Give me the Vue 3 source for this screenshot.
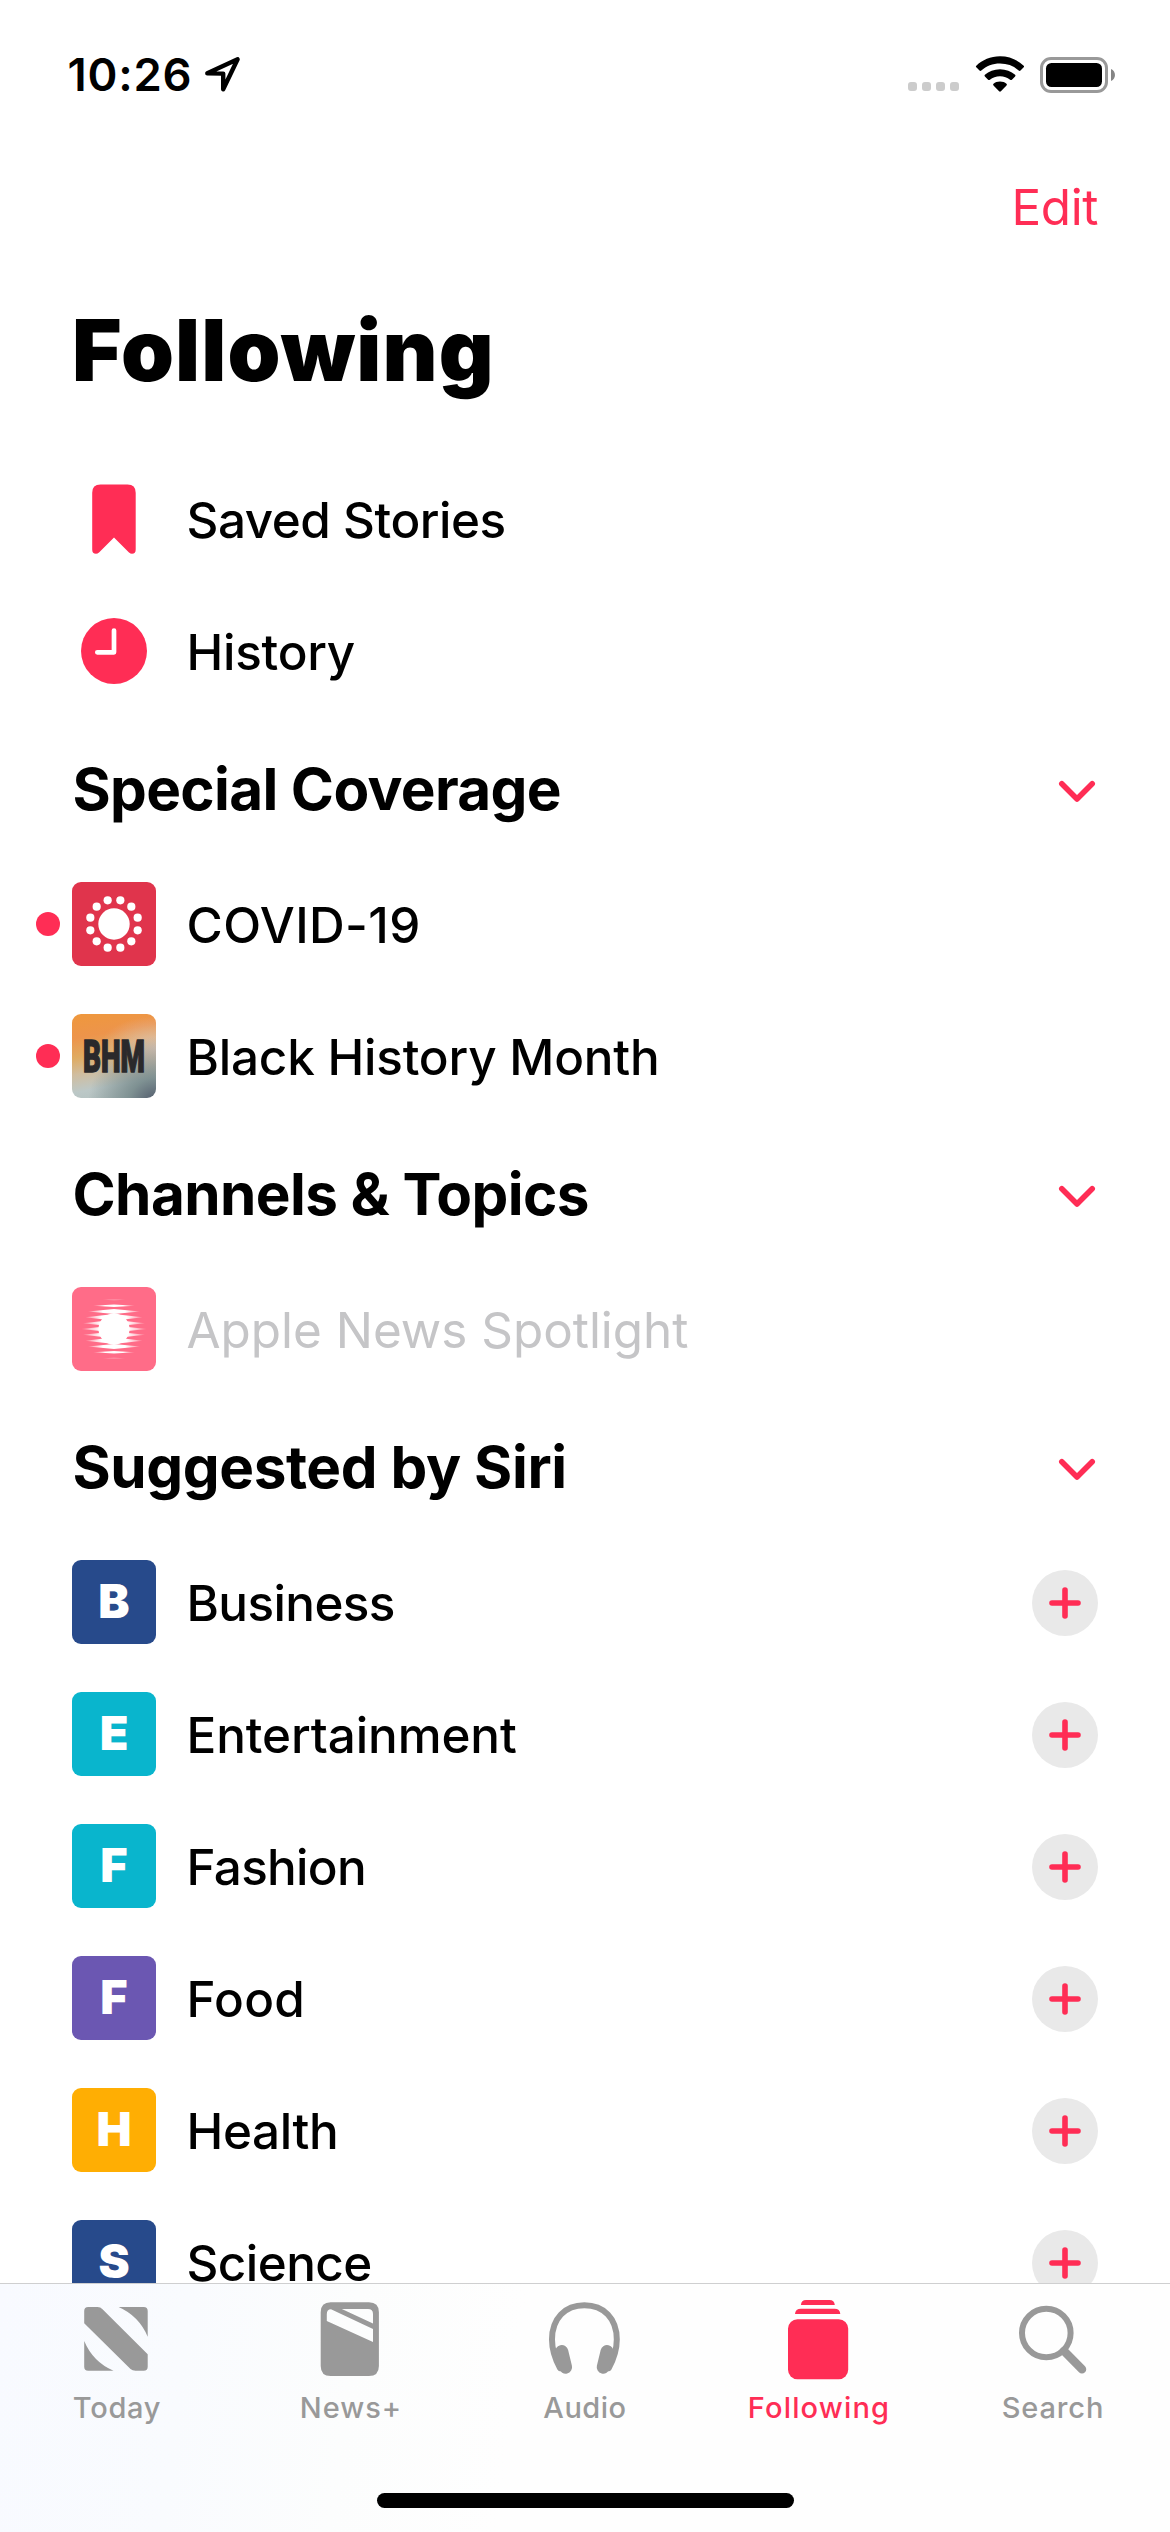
<script setup>
const shortcuts = [
  { name: 'Saved Stories', icon: 'bookmark', tracking: -0.46 },
  { name: 'History', icon: 'clock', tracking: -0.25 },
]

const sections = [
  {
    title: 'Special Coverage',
    tracking: -0.65,
    rows: [
      { name: 'COVID-19', art: 'covid', unread: true, color: '#e0344c', tracking: 0.43 },
      { name: 'Black History Month', art: 'bhm', unread: true, color: '#e5a566', tracking: -0.2 },
    ],
  },
  {
    title: 'Channels & Topics',
    tracking: -0.58,
    rows: [
      { name: 'Apple News Spotlight', art: 'spotlight', muted: true, color: '#ff6c88', tracking: 0 },
    ],
  },
  {
    title: 'Suggested by Siri',
    tracking: -0.4,
    rows: [
      { name: 'Business', letter: 'B', color: '#274a8b', add: true, tracking: -0.6 },
      { name: 'Entertainment', letter: 'E', color: '#09b5cd', add: true, tracking: -0.1 },
      { name: 'Fashion', letter: 'F', color: '#09b5cd', add: true, tracking: -0.7 },
      { name: 'Food', letter: 'F', color: '#6b57b2', add: true, tracking: 0.24 },
      { name: 'Health', letter: 'H', color: '#ffae03', add: true, tracking: -0.35 },
      { name: 'Science', letter: 'S', color: '#274a8b', add: true, tracking: -0.56 },
    ],
  },
]

const tabs = [
  { name: 'Today', tracking: 0.7 },
  { name: 'News+', tracking: 0.96 },
  { name: 'Audio', tracking: 0.5 },
  { name: 'Following', active: true, tracking: 1.16 },
  { name: 'Search', tracking: 0.86 },
]

const ring = Array.from({ length: 12 }, (_, i) => {
  const a = ((15 + i * 30) * Math.PI) / 180
  return { x: 42 + 24.5 * Math.cos(a), y: 42 + 24.5 * Math.sin(a) }
})

// Horizontal rays crossing the disc, widest at the centre
const rays = [12, 21, 26, 28.5, 31, 32.5, 31, 28.5, 26, 21, 12].map((half, i) => {
  const y = 42 + (i - 5) * 5.83
  const edge = Math.min(i, 10 - i)
  const t = [0.4, 1.2, 2.6, 3.4, 3.4, 3.4][edge]
  return { d: `M${42 - half} ${y}L42 ${y - t}L${42 + half} ${y}L42 ${y + t}Z`, opacity: edge === 0 ? 0.4 : 1 }
})

const track = (v) => ({ letterSpacing: v + 'px' })
</script>

<template>
  <div class="screen">
    <header class="status">
      <div class="clock">
        <span class="time">10:26</span>
        <svg class="arrow" width="38" height="38" viewBox="0 0 38 38">
          <path d="M3.300 17.200 33.600 3.300 19.200 33.200V17.600Z" fill="none" stroke="#000" stroke-width="4.400" stroke-linejoin="round" />
        </svg>
      </div>
      <div class="indicators">
        <div class="cell"><i v-for="n in 4" :key="n"></i></div>
        <svg class="wifi" width="50" height="37" viewBox="0 0 50 37">
          <path d="M25 .3C34.600 .3 42.500 3.900 48.700 9.700Q49.500 10.500 48.700 11.300L45.500 14.600Q44.600 15.400 43.700 14.600C38.600 10 32.300 7.600 25 7.600S11.400 10 6.300 14.600Q5.400 15.400 4.500 14.600L1.300 11.300Q.5 10.500 1.300 9.700C7.500 3.900 15.400 .3 25 .3Z" />
          <path d="M25 13.200C31 13.200 36.100 15.300 40.100 18.800Q41 19.600 40.100 20.500L36.900 23.700Q36 24.500 35.100 23.700C32.300 21.500 29 20.200 25 20.200S17.700 21.500 14.900 23.700Q14 24.500 13.100 23.700L9.900 20.500Q9 19.600 9.900 18.800C13.900 15.300 19 13.200 25 13.200Z" />
          <path d="M25 25.600C27.700 25.600 29.800 26.400 31.500 27.700Q32.400 28.500 31.500 29.400L25.900 35.300Q25 36.200 24.100 35.300L18.500 29.400Q17.600 28.500 18.500 27.700C20.200 26.400 22.300 25.600 25 25.600Z" />
        </svg>
        <svg class="battery" width="76" height="36" viewBox="0 0 76 36">
          <rect x="1.500" y="1.500" width="65" height="33" rx="9.500" fill="none" stroke="#999" stroke-width="3" />
          <rect x="6" y="6" width="56" height="24" rx="5.500" />
          <path d="M71 12C76.300 14 76.300 22 71 24Z" fill="#858585" />
        </svg>
      </div>
    </header>

    <nav class="navbar"><span class="edit">Edit</span></nav>
    <h1 class="title">Following</h1>

    <main class="list">
      <div v-for="s in shortcuts" :key="s.name" class="row">
        <div class="gutter"></div>
        <svg v-if="s.icon === 'bookmark'" class="glyph" viewBox="0 0 84 84">
          <path d="M28.500 7.500H55.500Q63.700 7.500 63.700 15.700V72.500Q63.700 76.800 60 76.800 58.400 76.800 57 75.500L42 60.500 27 75.500Q25.600 76.800 24 76.800 20.200 76.800 20.200 72.500V15.700Q20.200 7.500 28.500 7.500Z" fill="#ff2d55" />
        </svg>
        <svg v-else class="glyph" viewBox="0 0 84 84">
          <circle cx="42" cy="42" r="33" fill="#ff2d55" />
          <path d="M42 21.500V43.300H25.300" fill="none" stroke="#fff" stroke-width="4.700" stroke-linecap="round" stroke-linejoin="round" />
        </svg>
        <span class="label" :style="track(s.tracking)">{{ s.name }}</span>
      </div>

      <section v-for="sec in sections" :key="sec.title">
        <div class="heading">
          <h2 :style="track(sec.tracking)">{{ sec.title }}</h2>
          <svg class="chevron" width="38" height="24" viewBox="0 0 38 24">
            <path d="M3.800 3.800 19 19 34.200 3.800" fill="none" stroke="#ff2d55" stroke-width="5.600" stroke-linecap="round" stroke-linejoin="round" />
          </svg>
        </div>

        <div v-for="r in sec.rows" :key="r.name" class="row">
          <div class="gutter"><i v-if="r.unread" class="unread"></i></div>
          <div class="tile" :class="r.art" :style="{ backgroundColor: r.color }">
            <span v-if="r.letter">{{ r.letter }}</span>
            <svg v-else-if="r.art === 'covid'" viewBox="0 0 84 84">
              <circle cx="42" cy="42" r="15.700" fill="#fff" />
              <circle v-for="(d, i) in ring" :key="i" :cx="d.x" :cy="d.y" r="4.100" fill="#fff" />
            </svg>
            <svg v-else-if="r.art === 'bhm'" viewBox="0 0 84 84">
              <text class="bhm-text" transform="translate(42 57.500) scale(.64 1)" text-anchor="middle">BHM</text>
            </svg>
            <svg v-else viewBox="0 0 84 84">
              <defs>
                <linearGradient id="ray">
                  <stop offset="0" stop-color="#fff" stop-opacity=".2" />
                  <stop offset=".28" stop-color="#fff" />
                  <stop offset=".72" stop-color="#fff" />
                  <stop offset="1" stop-color="#fff" stop-opacity=".2" />
                </linearGradient>
              </defs>
              <circle cx="42" cy="42" r="15.500" fill="#fff" />
              <path v-for="(ray, i) in rays" :key="i" :d="ray.d" :opacity="ray.opacity" fill="url(#ray)" />
            </svg>
          </div>
          <span class="label" :class="{ muted: r.muted }" :style="track(r.tracking)">{{ r.name }}</span>
          <div v-if="r.add" class="add">
            <svg width="66" height="66" viewBox="0 0 66 66">
              <path d="M33 20V46M20 33H46" stroke="#ff2d55" stroke-width="5.600" stroke-linecap="round" />
            </svg>
          </div>
        </div>
      </section>
    </main>

    <footer class="tabbar">
      <div class="tabs">
        <div v-for="t in tabs" :key="t.name" class="tab" :class="{ active: t.active }">
          <svg width="84" height="92" viewBox="0 0 84 92">
            <g v-if="t.name === 'Today'" fill="currentColor">
              <path d="M13.200 13H22.500Q25.500 13 27.500 15.300L72.700 60.200V72.700Q72.700 76.700 68.700 76.700H60.500Q57.500 76.700 55.500 75L9.200 29.300V17Q9.200 13 13.200 13Z" />
              <path d="M43.600 13H68.700Q72.700 13 72.700 17V42.700Q64 22 43.600 13Z" />
              <path d="M9.200 47Q18 68 38.500 76.700H13.200Q9.200 76.700 9.200 72.700Z" />
            </g>
            <path v-else-if="t.name === 'News+'" fill="currentColor" fill-rule="evenodd"
              d="M21.700 8.300H59.900Q69.900 8.300 69.900 18.300V72Q69.900 82 59.900 82H21.700Q11.700 82 11.700 72V18.300Q11.700 8.300 21.700 8.300ZM22 15.300Q17.800 15.300 17.800 20.300V27L64 48V34.900ZM32.800 15 64 29.600V20Q64 15 59 15Z" />
            <g v-else-if="t.name === 'Audio'" fill="none" stroke="currentColor" stroke-linecap="round">
              <path d="M17 74C11.500 64 9 55 9 45.500 9 24.500 22 11.300 41.400 11.300S73.800 24.500 73.800 45.500C73.800 55 71.300 64 65.800 74" stroke-width="6" />
              <path d="M18.800 57.500 22.600 73.200M64 57.500 60.200 73.200" stroke-width="13" />
            </g>
            <g v-else-if="t.name === 'Following'" fill="currentColor">
              <rect x="11" y="25.200" width="60.200" height="60" rx="9.500" />
              <path d="M18 20Q18.300 14.700 24 14.700H57.500Q63 14.700 63.300 20Z" />
              <path d="M23.900 11Q24.300 6 29 6H52.500Q57.300 6 57.800 11Z" />
            </g>
            <g v-else fill="none" stroke="currentColor">
              <circle cx="35.300" cy="39" r="24.300" stroke-width="6" />
              <path d="M53 57 71 75.200" stroke-width="8.500" stroke-linecap="round" />
            </g>
          </svg>
          <span :style="track(t.tracking)">{{ t.name }}</span>
        </div>
      </div>
      <div class="home"></div>
    </footer>
  </div>
</template>

<style>
body { margin: 0; background: #fff; }
</style>

<style scoped>
.screen {
  display: flex;
  flex-direction: column;
  width: 1170px;
  height: 2532px;
  overflow: hidden;
  background: #fff;
  color: #000;
  font-family: Inter, "Liberation Sans", sans-serif;
}
.screen * { box-sizing: border-box; }
.screen svg { display: block; }
.status {
  flex: none;
  display: flex;
  justify-content: space-between;
  height: 149px;
  padding: 0 54px 0 67.500px;
}
.clock { display: flex; align-items: center; }
.time { font-size: 45.400px; font-weight: 600; letter-spacing: .78px; line-height: 149px; }
.arrow { margin: 1px 0 0 11.500px; }
.indicators { display: flex; align-items: center; }
.cell { display: flex; gap: 5px; margin: 24px 58.500px 0 0; }
.cell { margin-right: 16px; }
.cell i { width: 9px; height: 9px; border-radius: 3px; background: #ccc; }
.wifi { margin: -1px 15px 0 0; }
.navbar {
  flex: none;
  height: 116px;
  padding-right: 72px;
  text-align: right;
}
.edit { color: #ff2d55; font-size: 49.400px; line-height: 116px; letter-spacing: -.4px; }
.title {
  flex: none;
  height: 170px;
  margin: 0 0 18px;
  padding-left: 72px;
  font-size: 84.800px;
  font-weight: 900;
  line-height: 170px;
  letter-spacing: 1.120px;
}
.list { flex: 1; min-height: 0; overflow: hidden; }
.row { display: flex; align-items: center; height: 132px; padding-right: 72px; }
.gutter { flex: none; width: 72px; padding-left: 36px; }
.unread { display: block; width: 24px; height: 24px; border-radius: 50%; background: #ff2d55; }
.glyph, .tile { flex: none; width: 84px; height: 84px; }
.tile {
  border-radius: 9px;
  overflow: hidden;
  color: #fff;
  font-size: 46.800px;
  font-weight: 900;
  line-height: 83px;
  text-align: center;
}
.tile.bhm {
  background-image:
    radial-gradient(circle at 100% 108%, rgba(70, 78, 98, .95) 0, rgba(112, 132, 134, .8) 22%, rgba(150, 165, 162, 0) 55%),
    radial-gradient(ellipse at 100% 42%, rgba(220, 200, 190, .9) 0, rgba(220, 190, 170, 0) 48%),
    linear-gradient(170deg, #ef983c 0%, #ed944b 25%, #dfab62 45%, #d0bd9f 62%, #bcc8c7 80%, #b0bfbe 100%);
}
.bhm-text {
  font: 900 43.500px Roboto, "Open Sans", sans-serif;
  fill: #2a292b;
  stroke: #2a292b;
  stroke-width: 1.400px;
}
.label {
  flex: 1;
  margin-left: 30.500px;
  padding-top: 2px;
  font-size: 49.400px;
  font-weight: 500;
  line-height: 60px;
  white-space: nowrap;
}
.label.muted { color: #c5c5c7; font-weight: 400; }
.add { flex: none; width: 66px; height: 66px; margin-top: 1px; border-radius: 50%; background: #e9e9e9; }
.heading {
  display: flex;
  align-items: center;
  justify-content: space-between;
  height: 141px;
  padding: 0 74px 0 72.500px;
}
.heading h2 { margin: 0; padding-top: 3px; font-size: 58.400px; font-weight: 700; line-height: 70px; }
.chevron { margin-top: 9px; }
.tabbar {
  flex: none;
  height: 249px;
  border-top: 1px solid #cfcfd0;
  background: linear-gradient(97deg, #f8faff 0, #f9fbfe 16%, #fcfdfd 30%, #fefefe 44%);
}
.tabs { display: flex; height: 209px; padding-top: 10px; }
.tab {
  flex: 1;
  display: flex;
  flex-direction: column;
  align-items: center;
  color: #999;
  font-size: 29px;
  font-weight: 500;
  line-height: 43px;
}
.tab.active { color: #ff2d55; }
.home { width: 417px; height: 15px; margin: 0 auto; border-radius: 8px; background: #000; }
</style>
